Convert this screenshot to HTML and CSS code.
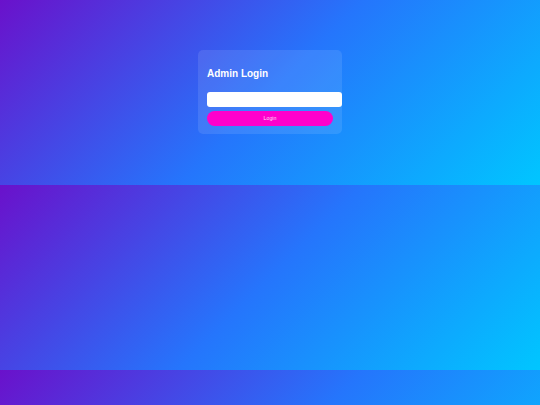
FILE: index.html
```html
<!DOCTYPE html>
<html>
<head>
<meta charset="utf-8">
<link rel="stylesheet" href="styles.css">
</head>
<body>
<div class="card">
  <h2 class="title">Admin Login</h2>
  <form class="form">
    <input class="field" type="text">
    <button class="btn" type="button">Login</button>
  </form>
</div>
</body>
</html>
```
FILE: styles.css
```css
html {
  margin: 0;
}
body {
  margin: 0;
  padding: 50px 0 51px;
  font-family: "Liberation Sans", Arial, sans-serif;
  background: linear-gradient(135deg, #6a11cb 0%, #2575fc 50%, #00c6ff 100%);
}
.card {
  width: 126px;
  margin: 0 auto;
  padding: 9px 9px 8px;
  background: rgba(255, 255, 255, 0.1);
  border-radius: 5px;
}
.title {
  margin: 9px 0 12.5px;
  font-family: "Liberation Sans", Arial, sans-serif;
  font-size: 10px;
  font-weight: bold;
  color: #ffffff;
  line-height: 11.2px;
}
.form {
  margin: 0;
  display: flex;
  flex-direction: column;
  gap: 4px;
}
.field {
  display: block;
  box-sizing: border-box;
  width: 135px;
  height: 15px;
  margin: 0;
  padding: 0 4px;
  border: none;
  border-radius: 3px;
  background: #ffffff;
  outline: none;
}
.btn {
  display: block;
  width: 126px;
  height: 15px;
  margin: 0;
  padding: 0;
  border: none;
  border-radius: 8px;
  background: #ff00cc;
  color: rgba(255, 255, 255, 0.85);
  font-family: "Liberation Sans", Arial, sans-serif;
  font-size: 5.3px;
  line-height: 15px;
}
```
